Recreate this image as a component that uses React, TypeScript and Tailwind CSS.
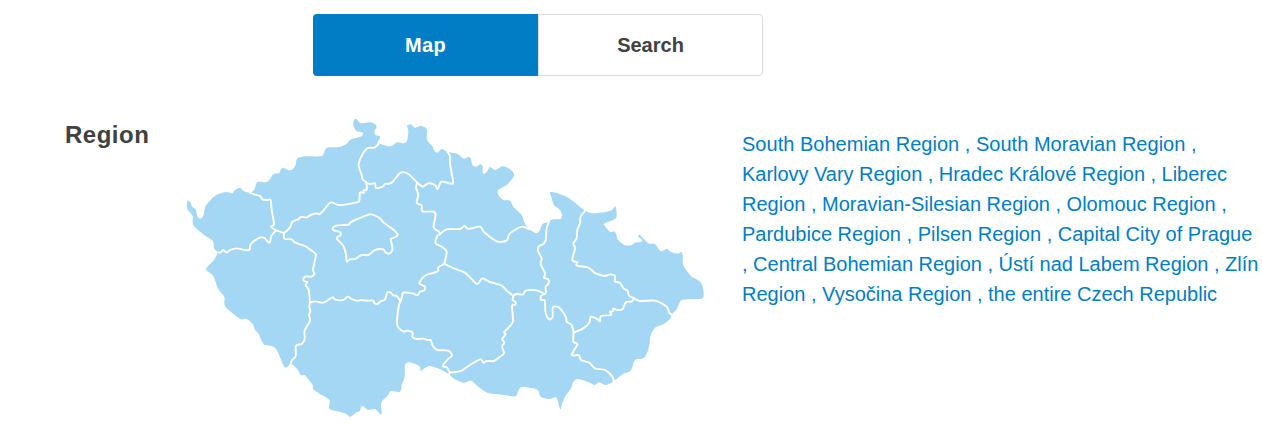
type Point = [number, number];

// Parses "x,y x,y ..." and maps it to map coordinates.
function parse(points: string, ox = 0, oy = 0, scale = 1): Point[] {
  return points
    .trim()
    .split(/\s+/)
    .map((pair) => {
      const [x, y] = pair.split(",").map(Number);
      return [ox + x * scale, oy + y * scale];
    });
}

// Smooth curve through all the points (Catmull-Rom turned into Béziers).
function curve(pts: Point[], closed = false): string {
  const n = pts.length;
  const at = (i: number): Point =>
    closed ? pts[(i + n) % n] : pts[Math.max(0, Math.min(n - 1, i))];
  const f = (v: number) => v.toFixed(2);
  let d = `M${f(pts[0][0])} ${f(pts[0][1])}`;
  for (let i = 0; i < (closed ? n : n - 1); i++) {
    const a = at(i - 1);
    const b = at(i);
    const c = at(i + 1);
    const e = at(i + 2);
    d += `C${f(b[0] + (c[0] - a[0]) / 7)} ${f(b[1] + (c[1] - a[1]) / 7)} ${f(c[0] - (e[0] - b[0]) / 7)} ${f(c[1] - (e[1] - b[1]) / 7)} ${f(c[0])} ${f(c[1])}`;
  }
  return closed ? d + "Z" : d;
}

const country = `188.5,200.7 190.7,202.7 192,206.7 195.7,209.3 197.3,216 200,218.7 203.3,216 205.3,206.7 210,200.7 216,195.3 226,192 232.3,193.3 235,190 240,187.7 244,191.3 250,192.7 254,190 256.7,182.7 260,181.7 267.3,182 270.7,178.3 273.3,174 279,173.3 281,169.3 284,167.7 288.3,170.3 292.7,169.3 295.7,164.7 297.3,158.3 306,156.3 321.7,156 325,150 328.7,147.3 339.3,147 346.7,143.7 351,139.3
357.3,137.7 361.7,136 362.7,132.7 356,130.7 353.3,125 354,120 356.7,119.3 360.7,123.3 370.7,122.3 376.7,126 374.3,131.7 375.7,135.3 380.3,136.7 378.7,142.7 390,146.3 397.3,142.3 404,143.3 407.3,140 408.3,130 407,125.7 410.7,124.3 415,127.7 420.7,126 426.7,129 427,140 432.3,146 434,150 437.3,152.7 441.7,149 445,150.7 449.3,152.3 457.3,154 464,158.7 468.3,157 470.7,158.3 472.3,165 476,166.7 480.7,164.3 482.7,166.7 482.7,172.7 485.7,173.3 490,167.3 495.3,170 502.7,166.3 510,169.3 514,174 512.7,178.3 506.7,185 498.3,190 498.3,194.7 503.3,200 510,200.7 513.3,206.7 521.7,215 524.7,223.3 528.3,229
530,230 536.7,233.3 540,230 542.7,224 548.3,221.7 553.3,219.3 560.7,219 562,215 559.3,209.3 554,205 551.3,196.7 550,192.3 556,192.7 568.3,197.7 580,206.7 585.3,210.7 593.3,213.3 610,211 614.7,206.7 616,208 616,218 605,223.3 604.3,225.3 610,231.7 615,232 618.3,240 625,245.3 631.7,245 635,242.7 641.7,241.7 641.7,239.3 638.3,236.7 640,235 648.3,243.3 655,244.3 660,250.7 662.7,251 666.7,249 671.7,252.3 678.3,253.7 681,252 682.7,255 683.3,265 691,276 699.3,281 702.7,286.7 703.7,295 701,298.7 682.7,299.7 679,304 677,308.7 671.7,314.7 670.7,318.3 663.3,324.3 655.7,327.3 650.7,335
649,346.7 645.7,356 641.7,358.7 635,360 630.7,370.7 623.3,373.7 614,381 605.7,385 599,382.3 594.7,385 590,382.7 578.3,379 573.3,381.7 571,388.3 565,396.7 562,404 560.7,409 559.3,406.7 557.3,399 555,397.3 549.3,399 540.7,396.7 538.3,390.7 533.3,388.3 521.7,387 518.3,390.7 515,396.3 498.3,394.3 487.3,392.7 478.3,386.7 471,380.7 463.3,382.7 453.3,378.3 449,374.3 440,369.3 430,366 426,367.3 420.7,370.7 419.3,366 409.3,362.3 405,365 404.7,376.7 401.7,385 400,391.7 390.7,391 388.3,395 381.3,402.7 381.7,414 379.3,413.3 375,409 367.3,409.7 363.3,406 361,407 360,410.7 356,412.7 350,416.7
345,413.3 331.7,410 329,407.7 329.3,400 320,394 313.3,389 312.7,385 309.3,380.7 305,375.3 300.7,375 297.3,369 291.7,364.3 289,365.3 286,367.7 283.3,365 276.7,350 271.7,346 265,345.3 261.7,341 258.3,333.3 255,330 252.7,324 246.7,319 240,318.7 226.7,308.3 224.3,303.3 224.3,296.7 218.3,289.3 213.3,276 206,269.3 214,260 217.3,252.7 214,248.3 212.7,241 203.3,234.3 193.3,225 192.7,216 187.3,209 187.3,201.5`;

// Region borders; each group of points has its own origin, in thirds of a unit.
const borders: { o: Point; p: string; closed?: boolean }[] = [
  { o: [180, 110], p: "210,248 222,253 240,258 247,268 262,270 272,270 275,300 282,342 273,350 287,360" },
  { o: [180, 110], p: "114,427 122,427 130,420 140,428 150,420 170,415 190,419 208,420 212,403 235,385 252,383 262,394 270,397 274,378 287,362" },
  { o: [180, 110], p: "287,362 300,365 312,368 330,352 337,335 355,328 363,321 380,322 392,315 410,310 418,313 430,302 445,283 455,277 475,285 500,283 530,277 538,272 540,248 552,248 551,240 560,240 560,225 558,218" },
  { o: [350, 110], p: "88,92 84,103 73,113 52,115 35,138 26,165 35,195 38,208 50,218" },
  { o: [350, 110], p: "48,218 60,222 75,220 78,234 98,230 105,222 125,218 152,188 175,192 202,218 218,230 235,220 255,225 263,237 275,215 308,221 305,190 300,160 300,138 291,124" },
  { o: [350, 110], p: "202,218 198,232 205,255 200,278 215,287 217,304 250,305 257,315 251,352 267,365 270,372" },
  { o: [350, 110], p: "270,372 290,358 330,357 343,347 355,357 390,350 403,367 440,394 470,391 480,370 515,350 537,358" },
  { o: [350, 110], p: "270,372 262,378 257,400 275,410 290,425 283,462" },
  { o: [350, 260], p: "283,12 265,22 263,34 225,47 208,70 225,80 222,92 210,95 203,106 190,101 160,98 157,108 152,122" },
  { o: [350, 260], p: "283,12 305,22 330,32 345,38 360,52 382,72 397,55 420,66 455,77 470,92 490,108" },
  { o: [500, 280], p: "40,48 50,42 70,43 77,32 110,31 133,42" },
  { o: [350, 260], p: "490,108 488,120 497,127 495,135 486,138 488,187 463,215 467,222 457,237 463,248 456,260 462,280 447,292 432,303 410,303 400,308 390,298 355,318 337,331 318,336 300,338 296,348" },
  { o: [350, 260], p: "152,122 146,140 141,190 148,206 162,215 172,212 188,218 187,230 200,237 220,236 232,240 242,240 248,257 262,270 295,272 306,287 293,298 278,318 290,322 300,338" },
  { o: [180, 260], p: "390,128 405,124 430,128 458,112 465,119 490,120 503,110 515,117 530,122 545,120" },
  { o: [350, 260], p: "35,120 50,122 70,122 72,128 83,132 90,125 105,118 112,97 122,98 130,106 140,108 150,122" },
  { o: [180, 110], p: "312,368 313,386 335,388 345,398 375,408 392,420 407,432 405,450 399,480 403,490 395,500 375,500 370,512 382,516 377,525 386,540 390,578" },
  { o: [180, 260], p: "390,128 388,140 391,155 387,165 390,182 374,212 374,238 365,252 348,257 347,288 335,302 331,317" },
  {
    o: [180, 110],
    closed: true,
    p: "458,355 468,347 495,345 507,343 515,335 550,320 573,313 600,325 610,337 635,355 653,373 645,382 632,387 636,405 637,420 628,431 615,426 610,418 585,420 565,435 545,435 525,447 510,448 500,454 498,432 490,408 470,385 482,375 480,367 462,361",
  },
  { o: [530, 180], p: "58,122 50,145 47,180 40,192 25,200 25,215 35,235 32,252 45,280 42,293 55,298 55,312 47,320 47,340 33,348 33,360 44,362 47,398 58,418 68,410 68,385 75,379 90,385 108,412 110,425 125,435 131,458" },
  { o: [530, 180], p: "168,90 152,110 150,130 142,150 140,175 130,190 135,205 127,240 142,247 140,257 175,263 195,279 212,285 225,288 240,283 255,288 255,305 270,308 280,325 293,333 297,347 312,355" },
  { o: [530, 180], p: "312,355 305,365 288,366 277,388 262,390 250,385 250,393 240,395 243,405 213,408 210,424 200,416 182,410 178,428 160,445 131,458" },
  { o: [530, 180], p: "312,355 330,363 375,362 400,373 412,382 418,398 428,406" },
  { o: [500, 280], p: "221,158 220,185 232,193 215,225 236,225 243,240 268,248 285,265 315,270 337,290 342,305" },
];

const regionLines: { text: string; tracking: string }[] = [
  { text: "South Bohemian Region , South Moravian Region ,", tracking: "tracking-[0.02px]" },
  { text: "Karlovy Vary Region , Hradec Králové Region , Liberec", tracking: "tracking-[-0.03px]" },
  { text: "Region , Moravian-Silesian Region , Olomouc Region ,", tracking: "tracking-normal" },
  { text: "Pardubice Region , Pilsen Region , Capital City of Prague", tracking: "tracking-normal" },
  { text: ", Central Bohemian Region , Ústí nad Labem Region , Zlín", tracking: "tracking-[-0.01px]" },
  { text: "Region , Vysočina Region , the entire Czech Republic", tracking: "tracking-normal" },
];

function RegionMap() {
  return (
    <svg className="block h-[302px] w-[522px] shrink-0" viewBox="185 117 522 302" aria-label="Map of regions">
      <path d={curve(parse(country), true)} fill="#a4d7f4" />
      <g fill="none" stroke="#fff" strokeWidth="1.9" strokeLinejoin="round" strokeLinecap="round">
        {borders.map((b, i) => (
          <path key={i} d={curve(parse(b.p, b.o[0], b.o[1], 1 / 3), b.closed)} />
        ))}
      </g>
    </svg>
  );
}

export default function App() {
  return (
    <div className="h-[433px] w-[1262px] overflow-hidden bg-white pt-3.5 font-['Liberation_Sans',Arial,sans-serif] text-[#414141]">
      <div className="ml-[313px] flex h-[62px] w-[450px] text-xl font-bold">
        <button className="w-[225px] rounded-l bg-[#007dc5] tracking-[0.4px] text-white">Map</button>
        <button className="w-[225px] rounded-r border border-[#dcdcdc]">Search</button>
      </div>
      <div className="mt-[41px] flex items-start pl-[65px]">
        <h2 className="w-[120px] shrink-0 pt-[3px] text-2xl leading-[30px] font-bold tracking-[0.5px]">Region</h2>
        <RegionMap />
        <div className="ml-[35px] pt-3 text-xl leading-[30px] text-[#007dc5]">
          {regionLines.map((line) => (
            <div key={line.text} className={`whitespace-pre ${line.tracking}`}>
              {line.text}
            </div>
          ))}
        </div>
      </div>
    </div>
  );
}
